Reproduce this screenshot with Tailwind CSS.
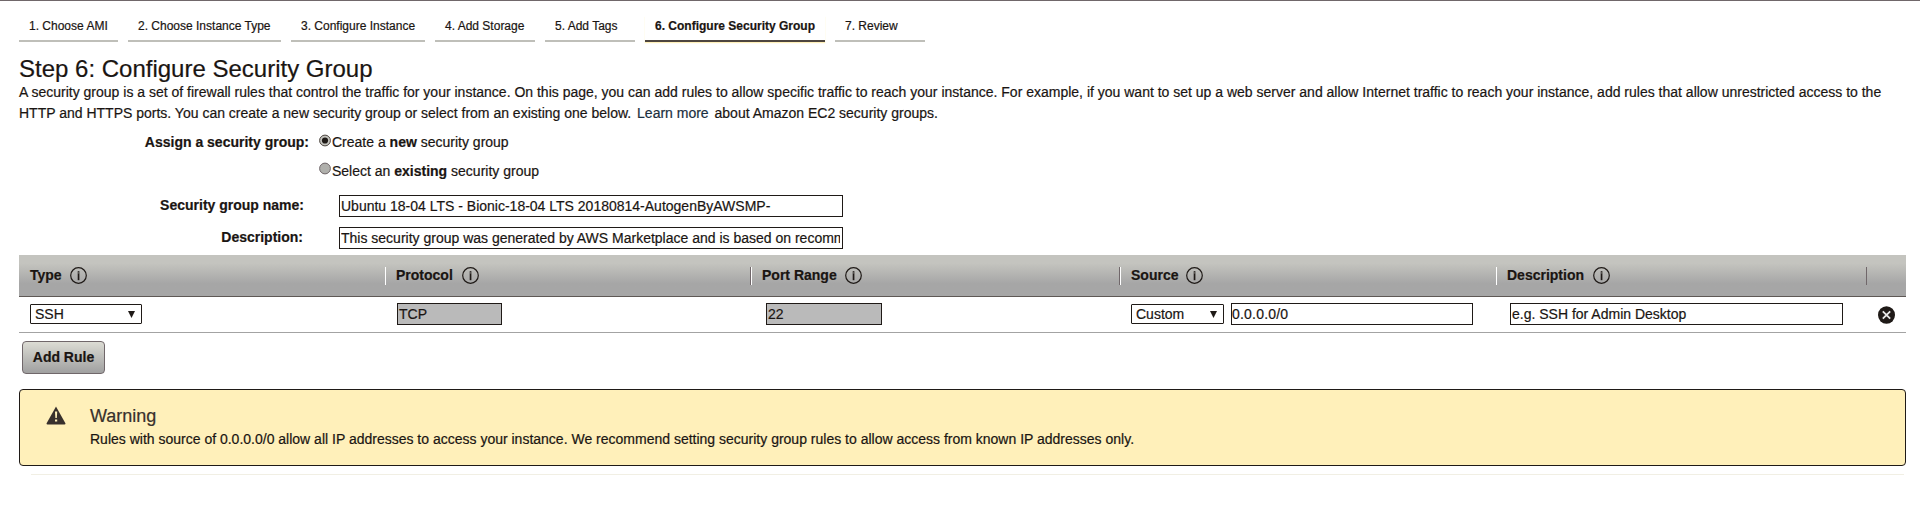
<!DOCTYPE html>
<html lang="en">
<head>
<meta charset="utf-8">
<title>Configure Security Group</title>
<script src="https://cdn.jsdelivr.net/npm/@tailwindcss/browser@4"></script>
</head>
<body class="bg-white text-[#1a1512] text-[14px] leading-[21px] h-[505px] overflow-hidden [-webkit-text-stroke:0.2px]" style="font-family:'Liberation Sans',Arial,sans-serif">
<svg class="hidden">
  <symbol id="info" viewBox="0 0 17 17"><circle cx="8.5" cy="8.5" r="7.8" fill="none" stroke="#1f1a17" stroke-width="1.2"/><rect x="7.7" y="4.2" width="1.7" height="9" fill="#1f1a17"/><rect x="7.7" y="5.6" width="1.7" height=".7" fill="#b0b0ac"/></symbol>
</svg>
<div class="border-t border-[#70676a] pl-[19px] pr-[14px]">
  <nav class="flex gap-[10px] pt-[15px] h-[41px] text-[12px] leading-[20px]">
    <a class="pl-[10px] w-[99px] whitespace-nowrap h-[26px] border-b-2 border-[#bfbfb9]">1. Choose AMI</a>
    <a class="pl-[10px] w-[153px] h-[26px] border-b-2 border-[#bfbfb9]">2. Choose Instance Type</a>
    <a class="pl-[10px] w-[134px] h-[26px] border-b-2 border-[#bfbfb9]">3. Configure Instance</a>
    <a class="pl-[10px] w-[100px] h-[26px] border-b-2 border-[#bfbfb9]">4. Add Storage</a>
    <a class="pl-[10px] w-[90px] h-[26px] border-b-2 border-[#bfbfb9]">5. Add Tags</a>
    <a class="pl-[10px] w-[180px] h-[26px] border-b-2 border-[#4d453f] font-bold whitespace-nowrap shadow-[0_1px_1px_#fff0ba]">6. Configure Security Group</a>
    <a class="pl-[10px] w-[90px] h-[26px] border-b-2 border-[#bfbfb9]">7. Review</a>
  </nav>
  <h1 class="mt-[13px] text-[24px] leading-[28px] h-[27px]">Step 6: Configure Security Group</h1>
  <p class="whitespace-nowrap">A security group is a set of firewall rules that control the traffic for your instance. On this page, you can add rules to allow specific traffic to reach your instance. For example, if you want to set up a web server and allow Internet traffic to reach your instance, add rules that allow unrestricted access to the<br>HTTP and HTTPS ports. You can create a new security group or select from an existing one below. <a class="ml-[2px] mr-[2px] text-[#1b2f40]">Learn more</a> about Amazon EC2 security groups.</p>

  <div class="flex mt-[8px] h-[21px]">
    <div class="w-[290px] text-right font-bold">Assign a security group:</div>
    <svg class="ml-[10px] mt-[2px] mr-[1px] w-[12px] h-[13px]" viewBox="0 0 12 13"><circle cx="6" cy="6.5" r="5.4" fill="#c4c4bf" stroke="#4d453f"/><circle cx="6" cy="6.5" r="3.1" fill="#1f1a17"/></svg>
    <div>Create a <b>new</b> security group</div>
  </div>
  <div class="flex mt-[8px] h-[21px]">
    <svg class="ml-[300px] mt-[1px] mr-[1px] w-[12px] h-[13px]" viewBox="0 0 12 13"><circle cx="6" cy="6.5" r="5.4" fill="#b0b0ac" stroke="#70676a"/></svg>
    <div>Select an <b>existing</b> security group</div>
  </div>
  <div class="flex mt-[13px] h-[22px]">
    <div class="w-[285px] text-right font-bold">Security group name:</div>
    <div class="ml-[35px] w-[504px] h-[22px] border border-[#1f1a17] pl-[1px] overflow-hidden whitespace-nowrap">Ubuntu 18-04 LTS - Bionic-18-04 LTS 20180814-AutogenByAWSMP-</div>
  </div>
  <div class="flex mt-[10px] h-[22px]">
    <div class="w-[285px] text-right font-bold"><span class="mr-px">Description:</span></div>
    <div class="ml-[35px] w-[504px] h-[22px] border border-[#1f1a17] pl-[1px] pr-[2px]"><div class="overflow-hidden whitespace-nowrap">This security group was generated by AWS Marketplace and is based on recommended</div></div>
  </div>

  <div class="mt-[6px] h-[42px] flex items-center bg-linear-to-b from-[#c4c4bf] from-20% to-[#a6a6a6] to-70% border-b border-[#5e5855] font-bold">
    <div class="w-[366px] pl-[11px] flex items-center gap-2">Type <svg class="size-[17px]"><use href="#info"/></svg></div>
    <div class="w-[365px] h-[18px] border-l border-white pl-[10px] flex items-center gap-[9px]">Protocol <svg class="size-[17px]"><use href="#info"/></svg></div>
    <div class="w-[369px] h-[18px] border-l border-[#70676a] flex"><div class="border-l border-white pl-[10px] flex items-center gap-2">Port Range <svg class="size-[17px]"><use href="#info"/></svg></div></div>
    <div class="w-[377px] h-[18px] border-l border-[#70676a] flex"><div class="border-l border-white pl-[10px] flex items-center gap-2">Source <svg class="size-[17px]"><use href="#info"/></svg></div></div>
    <div class="w-[370px] h-[18px] border-l border-white pl-[10px] flex items-center gap-[9px]">Description <svg class="size-[17px]"><use href="#info"/></svg></div>
    <div class="h-[18px] border-l border-[#70676a]"></div>
  </div>
  <div class="h-[36px] pl-[11px] flex items-center border-b border-[#a3a3a3] pb-[1px]">
    <div class="w-[112px] h-[20px] border border-[#1f1a17] rounded-[1px] pl-[4px] pr-[6px] flex items-center justify-between">SSH <svg class="w-[7px] h-[7px]" viewBox="0 0 7 7"><path d="M0 0H7L3.5 7Z" fill="#1f1a17"/></svg></div>
    <div class="ml-[255px] w-[105px] h-[22px] border border-[#1f1a17] bg-[#bababa] pl-[1px] leading-[20px]">TCP</div>
    <div class="ml-[264px] w-[116px] h-[22px] border border-[#1f1a17] bg-[#bababa] pl-[1px] leading-[20px]">22</div>
    <div class="ml-[249px] w-[93px] h-[20px] border border-[#1f1a17] rounded-[1px] pl-[4px] pr-[6px] flex items-center justify-between">Custom <svg class="w-[7px] h-[7px]" viewBox="0 0 7 7"><path d="M0 0H7L3.5 7Z" fill="#1f1a17"/></svg></div>
    <div class="ml-[7px] w-[242px] h-[22px] border border-[#1f1a17] leading-[20px] tracking-[0.2px]">0.0.0.0/0</div>
    <div class="ml-[37px] w-[333px] h-[22px] border border-[#1f1a17] pl-[1px] leading-[20px]">e.g. SSH for Admin Desktop</div>
    <svg class="ml-[35px] mt-[2px] w-[17px] h-[18px]" viewBox="0 0 17 18"><ellipse cx="8.5" cy="9" rx="8.5" ry="8.8" fill="#1f1a17"/><path d="M4.800 5.300l7.400 7.400M12.200 5.300l-7.400 7.400" stroke="#e8e8e8" stroke-width="1.8"/></svg>
  </div>
  <div class="mt-[8px] ml-[3px] w-[83px] h-[33px] rounded-[4px] border border-[#70676a] bg-linear-to-b from-[#dcdcd4] to-[#a0a0a0] font-bold text-center leading-[31px]">Add Rule</div>
  <div class="mt-[15px] h-[77px] flex rounded-[4px] border border-[#1f1a17] bg-[#fff0ba] pt-[14px] pl-[26px]">
    <svg class="mt-[2px] w-[20px] h-[19px]" viewBox="0 0 20 19"><path d="M10 0.5L19.5 17.5a1 1 0 0 1-1 1H1.500a1 1 0 0 1-1-1Z" fill="#38302c"/><path d="M9 5.500h2.200l-.4 6.500h-1.400Z" fill="#fff0ba"/><rect x="9" y="13.500" width="2.200" height="2" fill="#fff0ba"/></svg>
    <div class="ml-[24px]">
      <div class="text-[18px] leading-[25px] text-[#38302c]">Warning</div>
      <div>Rules with source of 0.0.0.0/0 allow all IP addresses to access your instance. We recommend setting security group rules to allow access from known IP addresses only.</div>
    </div>
  </div>
  <div class="mt-[8px] ml-[12px] mr-[2px] border-t border-[#f1efe4]"></div>
</div>
</body>
</html>
